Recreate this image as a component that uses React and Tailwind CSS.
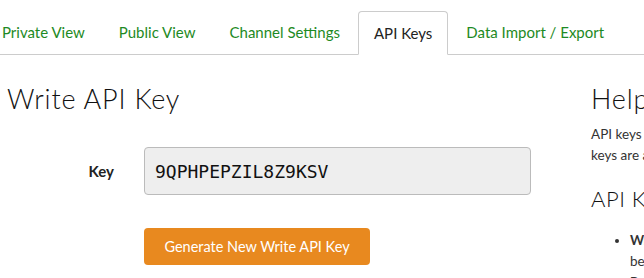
export default function App() {
  const tabs = ["Private View", "Public View", "Channel Settings", "API Keys", "Data Import / Export"];
  return (
    <div className="w-[644px] h-[278px] overflow-hidden bg-white relative" style={{ fontFamily: "Lato, 'Noto Sans', sans-serif" }}>
      <div className="flex items-end h-[55px] border-b border-[#cccccc] -ml-[14px]">
        {tabs.map((t) => (
          <div
            key={t}
            className={
              t === "API Keys"
                ? "shrink-0 whitespace-nowrap mr-[2px] px-[15px] h-[44px] -mb-px pt-[1px] flex items-center border border-[#cccccc] border-b-white rounded-t-[4px] bg-white text-[#222222] text-[15px]"
                : "shrink-0 whitespace-nowrap mr-[2px] px-[15px] h-[44px] pt-[1px] flex items-center border border-transparent text-[#1e8a24] text-[15px]"
            }
          >
            {t}
          </div>
        ))}
      </div>
      <div className="flex">
        <div className="w-[591px] shrink-0">
          <h1 className="pl-[7px] mt-[28px] text-[27px] leading-[32px] font-light tracking-[0.8px] text-[#111111]">
            Write API Key
          </h1>
          <div className="flex items-center mt-[32px]">
            <div className="w-[114px] text-right font-bold text-[15px] text-[#222222]">Key</div>
            <div
              className="ml-[30px] w-[387px] h-[48px] bg-[#eeeeee] border border-[#bbbbbb] rounded-[4px] flex items-center pl-[10px] text-[18px] text-[#111111]"
              style={{ fontFamily: "'DejaVu Sans Mono', monospace" }}
            >
              9QPHPEPZIL8Z9KSV
            </div>
          </div>
          <div className="ml-[144px] mt-[33px] w-[226px] h-[37px] bg-[#e8891f] rounded-[4px] flex items-center justify-center text-white text-[14.5px]">
            Generate New Write API Key
          </div>
        </div>
        <div className="w-[300px] shrink-0 text-[#333333]">
          <h2 className="mt-[28px] text-[27px] leading-[32px] font-light tracking-[0.8px] text-[#111111]">Help</h2>
          <p className="mt-[9px] text-[13.5px] leading-[21px] whitespace-nowrap">
            API keys enable you to write data to a channel or read data from a private channel. API
            <br />
            keys are auto-generated when you create a new channel.
          </p>
          <h2 className="mt-[20px] text-[22px] leading-[26px] font-light tracking-[0.5px] text-[#111111]">API Keys Settings</h2>
          <ul className="mt-[18px] pl-[39px] list-disc text-[13.5px] leading-[21px] whitespace-nowrap">
            <li>
              <b>Write API Key:</b> Use this key to write data to a channel.
              <br />
              be regenerated.
            </li>
            <li>
              <b>Read API Keys:</b> Use this key to allow others to view.
            </li>
          </ul>
        </div>
      </div>
    </div>
  );
}
